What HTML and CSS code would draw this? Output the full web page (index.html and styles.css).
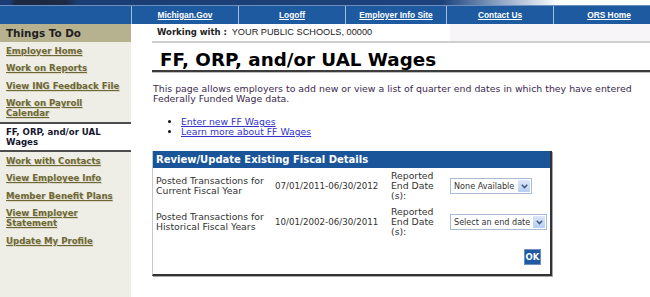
FILE: index.html
```html
<!DOCTYPE html>
<html>
<head>
<meta charset="utf-8">
<title>FF, ORP, and/or UAL Wages</title>
<link rel="stylesheet" href="styles.css">
</head>
<body>
<div class="topband"></div>
<div class="nav">
  <div class="nav-spacer"></div>
  <a class="nav-item" href="#">Michigan.Gov</a>
  <a class="nav-item" href="#">Logoff</a>
  <a class="nav-item" href="#">Employer Info Site</a>
  <a class="nav-item" href="#">Contact Us</a>
  <a class="nav-item nav-last" href="#">ORS Home</a>
</div>
<div class="layout">
  <aside class="sidebar">
    <div class="side-head">Things To Do</div>
    <ul class="side-list">
      <li><a href="#">Employer Home</a></li>
      <li><a href="#">Work on Reports</a></li>
      <li><a href="#">View ING Feedback File</a></li>
      <li><a href="#">Work on Payroll<br>Calendar</a></li>
      <li class="current">FF, ORP, and/or UAL<br>Wages</li>
      <li><a href="#">Work with Contacts</a></li>
      <li><a href="#">View Employee Info</a></li>
      <li><a href="#">Member Benefit Plans</a></li>
      <li><a href="#">View Employer<br>Statement</a></li>
      <li><a href="#">Update My Profile</a></li>
    </ul>
  </aside>
  <main class="main">
    <div class="working">
      <div class="working-left"><b>Working with :</b> <span class="working-id">YOUR PUBLIC SCHOOLS, 00000</span></div>
      <div class="working-right"></div>
    </div>
    <h1 class="title">FF, ORP, and/or UAL Wages</h1>
    <p class="intro">This page allows employers to add new or view a list of quarter end dates in which they have entered<br>Federally Funded Wage data.</p>
    <ul class="links">
      <li><a href="#">Enter new FF Wages</a></li>
      <li><a href="#">Learn more about FF Wages</a></li>
    </ul>
    <div class="panel">
      <div class="panel-head">Review/Update Existing Fiscal Details</div>
      <div class="panel-body">
        <div class="cell label">Posted Transactions for Current Fiscal Year</div>
        <div class="cell date">07/01/2011-06/30/2012</div>
        <div class="cell rep">Reported End Date (s):</div>
        <div class="cell sel">
          <div class="select sel-short"><span class="select-text">None Available</span><span class="select-btn"><svg width="7" height="5" viewBox="0 0 7 5"><path d="M0.8 0.8 L3.5 3.6 L6.2 0.8" fill="none" stroke="#3f5784" stroke-width="1.5"/></svg></span></div>
        </div>
        <div class="cell label">Posted Transactions for Historical Fiscal Years</div>
        <div class="cell date">10/01/2002-06/30/2011</div>
        <div class="cell rep">Reported End Date (s):</div>
        <div class="cell sel">
          <div class="select sel-long"><span class="select-text">Select an end date</span><span class="select-btn"><svg width="7" height="5" viewBox="0 0 7 5"><path d="M0.8 0.8 L3.5 3.6 L6.2 0.8" fill="none" stroke="#3f5784" stroke-width="1.5"/></svg></span></div>
        </div>
        <div class="ok-row"><button class="ok-btn" type="button">OK</button></div>
      </div>
    </div>
  </main>
</div>
</body>
</html>
```
FILE: styles.css
```css
* { box-sizing: border-box; }
html, body { margin: 0; padding: 0; }
body {
  width: 650px;
  height: 297px;
  overflow: hidden;
  background: #fff;
  font-family: "DejaVu Sans", Verdana, sans-serif;
}

/* top band + navigation */
.topband {
  height: 5px;
  background: linear-gradient(to right, #1b3d73 0, #1b3d73 1.5%, #1a2840 2.5%, #1c2a42 10%, #1b3d73 12%, #1d427b 68%, #8fa6c6 77%, #ffffff 86%);
}
.nav {
  display: grid;
  grid-template-columns: 131px 107px 107px 101px 107px 97px;
  height: 19px;
  background: #1e5aa0;
  border-top: 1px solid #6c8fc0;
}
.nav-item {
  border-left: 1px solid #a7bcd8;
  color: #fff;
  font: bold 8.4px/18px "Liberation Sans", Arial, sans-serif;
  text-align: center;
  text-decoration: underline;
}
.nav-last { padding-left: 14px; }

/* page body */
.layout { display: flex; height: 273px; }

.sidebar { width: 131px; flex: none; background: #efeee6; }
.side-head {
  height: 18px;
  background: #b6b290;
  padding-left: 6px;
  font-weight: bold;
  font-size: 10.4px;
  line-height: 18px;
  color: #1e1e1e;
}
.side-list { list-style: none; margin: 0; padding: 0; }
.side-list li {
  padding: 3.75px 6px;
  font-size: 8.6px;
  line-height: 10px;
  font-weight: bold;
}
.side-list a {
  color: #6d6834;
  text-decoration: underline;
  text-shadow: 1px 1px 0 #d8d5c6;
}
.side-list .current {
  background: #fff;
  border-top: 2px solid #4d4d4d;
  border-bottom: 2px solid #4d4d4d;
  padding: 3px 6px;
  color: #161630;
}

.main { flex: 1; padding-left: 21px; }

.working {
  display: flex;
  height: 19px;
  border-bottom: 2px solid #cfcfcf;
}
.working-left {
  width: 298px;
  padding-left: 5px;
  font-size: 8.5px;
  line-height: 17px;
  color: #222;
  white-space: nowrap;
}
.working-id {
  margin-left: 2px;
  font: 9.2px "Liberation Sans", Arial, sans-serif;
  color: #222;
}
.working-right { flex: 1; background: #f8f5f9; }

.title {
  margin: 6px 0 0;
  padding-left: 8px;
  font-size: 18.3px;
  line-height: 21px;
  font-weight: bold;
  color: #000;
  border-bottom: 2px solid #3c3c3c;
  box-shadow: 0 1px 0 #bdbdbd;
}

.intro {
  margin: 12px 0 0;
  padding-left: 1px;
  font-size: 9.4px;
  line-height: 10px;
  color: #3b2950;
}

.links {
  margin: 13px 0 0;
  padding-left: 29px;
  font-size: 9.3px;
  line-height: 10px;
  color: #111;
}
.links a { color: #3333cc; text-decoration: underline; }

.panel {
  margin-top: 14px;
  width: 400px;
  border-left: 1px solid #c8c8c8;
  border-right: 2px solid #333;
  border-bottom: 2px solid #333;
  box-shadow: 1px 1px 0 #a8a8a8;
}
.panel-head {
  height: 17px;
  background: #1b5599;
  color: #fff;
  font-weight: bold;
  font-size: 10px;
  line-height: 17px;
  padding-left: 3px;
}
.panel-body {
  display: grid;
  grid-template-columns: 118px 116px 60px 1fr;
  align-items: center;
  font-size: 9.3px;
  line-height: 10px;
  color: #333;
}
.cell { padding: 3px 0 3px 4px; }
.label { padding-left: 3px; }
.date { font-size: 8.7px; white-space: nowrap; }
.sel { padding-left: 3px; }

.select {
  display: flex;
  align-items: center;
  height: 16px;
  border: 1px solid #a7bad6;
  background: #fff;
  padding-left: 3px;
  font-size: 8.1px;
  color: #333;
}
.sel-short { width: 82px; }
.sel-long { width: 97px; }
.select-text { flex: 1; white-space: nowrap; }
.select-btn {
  display: flex;
  align-items: center;
  justify-content: center;
  width: 12px;
  height: 12px;
  margin-right: 1px;
  border-radius: 1px;
  background: linear-gradient(#dce7f8, #b8cdee);
}

.ok-row {
  grid-column: 1 / -1;
  display: flex;
  justify-content: flex-end;
  padding: 9px 9px 9px 0;
}
.ok-btn {
  width: 17px;
  height: 16px;
  padding: 0;
  border: 1px solid #6f8fbf;
  background: #1f5aa3;
  color: #fff;
  font: bold 8.5px/14px "DejaVu Sans", Verdana, sans-serif;
  text-align: center;
}
```
